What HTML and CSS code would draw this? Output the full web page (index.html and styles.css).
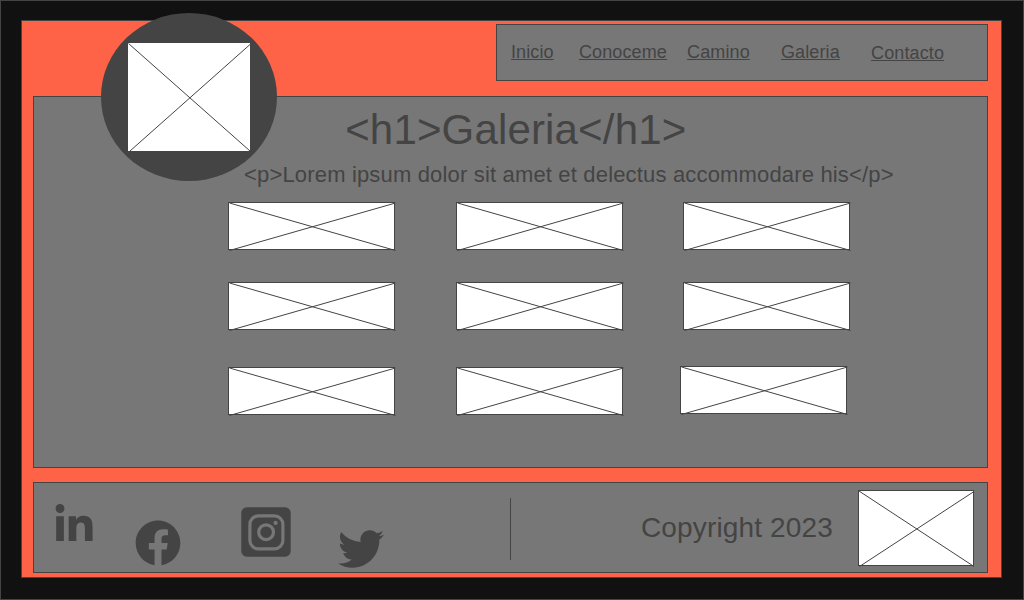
FILE: index.html
```html
<!DOCTYPE html>
<html lang="es">
<head>
<meta charset="utf-8">
<title>Galeria</title>
<link rel="stylesheet" href="styles.css">
</head>
<body>
<div class="page">
  <div class="panel">
    <div class="logo"><svg class="logo-image" viewBox="0 0 122 108"><path class="line" d="M0.5 0.5L122 108M2 108L122 1.5"/></svg></div>
    <nav class="nav">
      <a class="link">Inicio</a>
      <a class="link conoceme">Conoceme</a>
      <a class="link camino">Camino</a>
      <a class="link galeria">Galeria</a>
      <a class="link contacto">Contacto</a>
    </nav>
    <main class="main">
      <h1 class="title">&lt;h1&gt;Galeria&lt;/h1&gt;</h1>
      <p class="text">&lt;p&gt;Lorem ipsum dolor sit amet et delectus accommodare his&lt;/p&gt;</p>
      <div class="gallery">
        <div class="image"><svg class="cross" viewBox="0 0 167 48"><path class="line" d="M1.5 1L167.5 48.5M1.5 48.5L167.5 1"/></svg></div>
        <div class="image"><svg class="cross" viewBox="0 0 167 48"><path class="line" d="M1.5 1L167.5 48.5M1.5 48.5L167.5 1"/></svg></div>
        <div class="image"><svg class="cross" viewBox="0 0 167 48"><path class="line" d="M1.5 1L167.5 48.5M1.5 48.5L167.5 1"/></svg></div>
        <div class="image"><svg class="cross" viewBox="0 0 167 48"><path class="line" d="M1.5 1L167.5 48.5M1.5 48.5L167.5 1"/></svg></div>
        <div class="image"><svg class="cross" viewBox="0 0 167 48"><path class="line" d="M1.5 1L167.5 48.5M1.5 48.5L167.5 1"/></svg></div>
        <div class="image"><svg class="cross" viewBox="0 0 167 48"><path class="line" d="M1.5 1L167.5 48.5M1.5 48.5L167.5 1"/></svg></div>
        <div class="image"><svg class="cross" viewBox="0 0 167 48"><path class="line" d="M1.5 1L167.5 48.5M1.5 48.5L167.5 1"/></svg></div>
        <div class="image"><svg class="cross" viewBox="0 0 167 48"><path class="line" d="M1.5 1L167.5 48.5M1.5 48.5L167.5 1"/></svg></div>
        <div class="image last"><svg class="cross" viewBox="0 0 167 48"><path class="line" d="M1.5 1L167.5 48.5M1.5 48.5L167.5 1"/></svg></div>
      </div>
    </main>
    <footer class="footer">
      <svg class="icon linkedin" viewBox="-7 0 448 448"><path d="M100.28 448H7.4V148.9h92.88zM53.79 108.1C24.09 108.1 0 83.5 0 53.8a53.79 53.79 0 0 1 107.58 0c0 29.7-24.1 54.3-53.79 54.3zM447.9 448h-92.68V302.4c0-34.7-.7-79.2-48.29-79.2-48.29 0-55.69 37.7-55.69 76.7V448h-92.78V148.9h89.08v40.8h1.3c12.4-23.5 42.69-48.3 87.88-48.3 94 0 111.28 61.9 111.28 142.3V448z"/></svg>
      <svg class="icon facebook" viewBox="0 0 45 45"><path transform="translate(-0.3 0.5) scale(2.79)" d="M16 8.049c0-4.446-3.582-8.05-8-8.05C3.58 0-.002 3.603-.002 8.05c0 4.017 2.926 7.347 6.75 7.951v-5.625h-2.03V8.05H6.75V6.275c0-2.017 1.195-3.131 3.022-3.131.876 0 1.791.157 1.791.157v1.98h-1.009c-.993 0-1.303.621-1.303 1.258v1.51h2.218l-.354 2.326H9.25V16c3.824-.604 6.75-3.934 6.75-7.951z"/></svg>
      <svg class="icon instagram" viewBox="0 0 50 50"><rect x="0.3" y="0.3" width="49.4" height="49.4" rx="5.5"/><rect class="ring" x="8.9" y="8.9" width="33" height="33" rx="8.5"/><circle class="ring" cx="25.1" cy="25.2" r="7.4"/><circle class="dot" cx="34.6" cy="15.9" r="2.1"/></svg>
      <svg class="icon twitter" viewBox="0 48 512 416"><path d="M459.37 151.716c.325 4.548.325 9.097.325 13.645 0 138.72-105.583 298.558-298.558 298.558-59.452 0-114.68-17.219-161.137-47.106 8.447.974 16.568 1.299 25.34 1.299 49.055 0 94.213-16.568 130.274-44.832-46.132-.975-84.792-31.188-98.112-72.772 6.498.974 12.995 1.624 19.818 1.624 9.421 0 18.843-1.3 27.614-3.573-48.081-9.747-84.143-51.98-84.143-102.985v-1.299c13.969 7.797 30.214 12.67 47.431 13.319-28.264-18.843-46.781-51.005-46.781-87.391 0-19.492 5.197-37.36 14.294-52.954 51.655 63.675 129.3 105.258 216.365 109.807-1.624-7.797-2.599-15.918-2.599-24.04 0-57.828 46.782-104.934 104.934-104.934 30.213 0 57.502 12.67 76.67 33.137 23.715-4.548 46.456-13.32 66.599-25.34-7.798 24.366-24.366 44.833-46.132 57.827 21.117-2.273 41.584-8.122 60.426-16.243-14.292 20.791-32.161 39.308-52.628 54.253z"/></svg>
      <div class="divider"></div>
      <span class="copyright">Copyright 2023</span>
      <div class="footer-image"><svg class="cross" viewBox="0 0 116 76"><path class="line" d="M1 1L116 76.5M1.5 76.5L116 1.5"/></svg></div>
    </footer>
  </div>
</div>
</body>
</html>
```
FILE: styles.css
```css
* { box-sizing: border-box; }
body { margin: 0; font-family: "Liberation Sans", Arial, sans-serif; color: #444; }
.page { height: 600px; padding: 19px 21px 21px 20px; background: #111; border: 1px solid #444; }
.panel { position: relative; height: 558px; padding: 3px 13px 4px 11px; background: #ff6347; border: 1px solid #444; display: flex; flex-direction: column; }
.nav { align-self: flex-end; width: 492px; height: 57px; padding: 17px 0 0 14px; background: #777; border: 1px solid #444; display: flex; align-items: flex-start; }
.link { font-size: 18px; line-height: 21px; letter-spacing: 0.12px; text-decoration: underline; white-space: nowrap; }
.conoceme { margin-left: 25.2px; }
.camino { margin-left: 20.1px; }
.galeria { margin-left: 31.2px; }
.contacto { margin: 1px 0 0 31.2px; }
.logo { position: absolute; left: 79px; top: -8px; width: 176px; height: 168px; border-radius: 50%; background: #444; padding: 30px 27px; }
.logo-image { display: block; width: 122px; height: 108px; background: #fff; }
.line { fill: none; stroke: #444; stroke-width: 1; }
.main { margin-top: 15px; height: 372px; padding-top: 9px; background: #777; border: 1px solid #444; }
.title { position: relative; margin: 0 0 0 311.2px; font-size: 42px; line-height: 48px; letter-spacing: 0.16px; font-weight: 400; white-space: nowrap; }
.text { position: relative; margin: 8px 0 0 210px; font-size: 22px; line-height: 26px; letter-spacing: 0.167px; white-space: nowrap; }
.gallery { margin: 14px 0 0 194px; display: grid; grid-template-columns: 167px 167px 167px; grid-template-rows: 48px 48px 48px; column-gap: 61px; row-gap: 32px; }
.image { height: 48px; background: #fff; border: 1px solid #444; }
.image:nth-child(3n) { margin-left: -1px; margin-right: 1px; }
.image:nth-child(n+7) { margin-top: 5px; }
.image.last { margin: 4px 4px 0 -4px; }
.cross { display: block; width: calc(100% + 2px); height: calc(100% + 2px); margin: -1px; overflow: visible; }
.footer { margin-top: 14px; height: 91px; background: #777; border: 1px solid #444; display: flex; align-items: flex-start; }
.icon { display: block; flex: none; fill: #444; overflow: visible; }
.linkedin { width: 37px; height: 37px; margin: 21px 0 0 21px; }
.facebook { width: 45px; height: 45px; margin: 37px 0 0 44px; }
.instagram { width: 50px; height: 50px; margin: 24px 0 0 60px; }
.twitter { width: 46px; height: 38px; margin: 47px 0 0 47px; }
.ring { fill: none; stroke: #777; stroke-width: 3.2; }
.dot { fill: #777; }
.divider { flex: none; width: 1px; height: 62px; margin: 15px 0 0 126px; background: #444; }
.copyright { flex: none; width: 193px; margin: 29px 0 0 130px; font-size: 28px; line-height: 32px; letter-spacing: 0.14px; white-space: nowrap; }
.footer-image { flex: none; width: 116px; height: 76px; margin: 7px 0 0 24px; background: #fff; border: 1px solid #444; }
```
